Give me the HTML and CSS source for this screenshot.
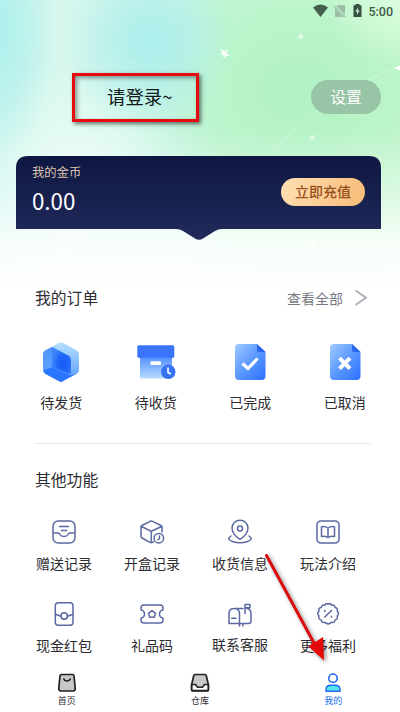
FILE: index.html
```
<!DOCTYPE html>
<html lang="zh-CN">
<head>
<meta charset="utf-8">
<title>我的</title>
<link rel="stylesheet" href="styles.css">
</head>
<body>
<div class="screen">
  <svg class="sparkles" width="400" height="270" viewBox="0 0 400 270" fill="#fff">
    <path d="M275 150 Q330 90 400 67" fill="none" stroke="#fff" stroke-opacity=".3" stroke-width="1"/>
    <path d="M220 48l4 3 4-2-1 4 3 3-4 0-2 3-1-4-3-1 2-2z" opacity=".8"/>
    <path d="M300 33l1.500 2.500 3 .5-2.500 1.500-1 2.500-1.500-2.500-3-1 3-.5z" opacity=".65"/>
    <path d="M312 134l1.500 2.500 3 1-3 1-1.500 3-1-3-3-1.500 3-.5z" opacity=".6"/>
    <path d="M400 65.500l-6 2.500 6 2.500z"/>
    <path d="M312 241l2 2 3 1-3 1-2 2-1-2-3-1 3-1z"/>
    <g opacity=".6"><circle cx="270" cy="37" r=".7"/><circle cx="134" cy="63" r=".7"/><circle cx="158" cy="58" r=".8"/><circle cx="240" cy="111" r=".6"/><circle cx="224" cy="131" r=".7"/><circle cx="321" cy="129" r=".7"/><circle cx="388" cy="189" r=".8"/></g>
  </svg>

  <div class="status">
    <svg width="50" height="16" viewBox="312 3 50 16">
      <path d="M313 7.500Q320.500 1.500 328 7.500L320.500 17z" fill="#43604d"/>
      <path d="M338.500 5H345V14.500L336.500 6zM335 8V17h9z" fill="#9dbda7"/><path d="M334 5.500l11.500 11.500" stroke="#86a591" stroke-width="1"/>
      <path d="M355.500 4h4v1.300h2V17h-8V5.300h2z" fill="#364f40"/><path d="M358.500 7l-3.200 4.500h2l-.8 3.700 3.200-4.700h-2z" fill="#d0f8da"/>
    </svg>
    <span>5:00</span>
  </div>

  <header class="profile">
    <div class="login">请登录~</div>
    <div class="settings">设置</div>
  </header>

  <section class="wallet">
    <svg class="wallet-bg" width="365" height="85" viewBox="0 0 365 85">
      <defs><linearGradient id="navy" x1="0" y1="0" x2="0" y2="1"><stop offset="0" stop-color="#0e1741"/><stop offset="1" stop-color="#212b5b"/></linearGradient></defs>
      <path d="M0 12Q0 0 12 0H353Q365 0 365 12V73H206Q202 73 199 75L187 82.500Q183 85 179 82.500L167 75Q164 73 160 73H0z" fill="url(#navy)"/>
    </svg>
    <div class="balance">
      <div class="coin-label">我的金币</div>
      <div class="amount">0.00</div>
    </div>
    <div class="recharge">立即充值</div>
  </section>

  <section class="orders">
    <div class="section-head">
      <h2>我的订单</h2>
      <div class="all">查看全部
        <svg width="14" height="18" viewBox="0 0 14 18"><path d="M1.500 1.500L12 8.700 1.500 16" fill="none" stroke="#a9abb4" stroke-width="1.800"/></svg>
      </div>
    </div>
    <div class="order-grid">
      <div class="item">
        <svg width="40" height="40" viewBox="0 0 40 40">
          <defs>
            <linearGradient id="b1" x1="0" y1="0" x2="0" y2="1"><stop offset="0" stop-color="#b4e0ff"/><stop offset="1" stop-color="#5c9cff"/></linearGradient>
            <linearGradient id="b2" x1="0" y1="0" x2="0" y2="1"><stop offset="0" stop-color="#4f94fc"/><stop offset=".6" stop-color="#5aa0ff"/><stop offset="1" stop-color="#2a74ff"/></linearGradient>
            <radialGradient id="b3" cx=".6" cy=".6" r=".6"><stop offset="0" stop-color="#125af6"/><stop offset=".5" stop-color="#2067fa"/><stop offset="1" stop-color="#3f86fc"/></radialGradient>
          </defs>
          <path d="M18 .8Q20 0 22 .8L36 8.500Q38 10 38 12V28Q38 30 36 31.500L22 39Q20 40 18 39L4 31.500Q2 30 2 28V12Q2 10 4 8.500z" fill="url(#b1)"/>
          <path d="M4 8.500L11 5 29 14.500V32L22 39Q20 40 18 39L4 31.500Q2 30 2 28V12Q2 10 4 8.500z" fill="url(#b2)"/>
          <path d="M3 28.500L11 25 29 33.500 36 31.500 22 39Q20 40 18 39L4 31.500z" fill="#2a76ff"/>
          <path d="M11 5L28 14Q30 15.500 30 18V32.500L11 25z" fill="url(#b3)"/>
        </svg>
        <span>待发货</span>
      </div>
      <div class="item">
        <svg width="40" height="40" viewBox="0 0 40 40">
          <defs><linearGradient id="b4" x1="0" y1="0" x2="0" y2="1"><stop offset="0" stop-color="#508bff"/><stop offset="1" stop-color="#b7dcff"/></linearGradient></defs>
          <path d="M4 14H36V35q0 1.500-1.500 1.500h-29Q4 36.500 4 35z" fill="url(#b4)"/>
          <rect x="1.300" y="3.200" width="37" height="12.500" rx="1.500" fill="#3974fb"/>
          <rect x="14.500" y="19.300" width="10.500" height="3.700" rx="1" fill="#fff"/>
          <circle cx="32.300" cy="29.800" r="7.200" fill="#3572f4"/>
          <path d="M32 25.500v5l3 1.500" fill="none" stroke="#fff" stroke-width="1.600"/>
        </svg>
        <span>待收货</span>
      </div>
      <div class="item">
        <svg width="40" height="40" viewBox="0 0 40 40">
          <defs><linearGradient id="b5" x1="0" y1="0" x2="1" y2="1"><stop offset="0" stop-color="#a0cbff"/><stop offset=".5" stop-color="#5b98ff"/><stop offset="1" stop-color="#2c70fe"/></linearGradient></defs>
          <path d="M9 2H27l8.500 8V34q0 4-4 4H9Q5 38 5 34V6Q5 2 9 2z" fill="url(#b5)"/><path d="M27 2v5.500Q27 10 29.500 10h6z" fill="#2866ee"/>
          <path d="M12.500 21.500l5.500 5 9.500-10" fill="none" stroke="#fff" stroke-width="3.200"/>
        </svg>
        <span>已完成</span>
      </div>
      <div class="item">
        <svg width="40" height="40" viewBox="0 0 40 40">
          <path d="M9 2H27l8.500 8V34q0 4-4 4H9Q5 38 5 34V6Q5 2 9 2z" fill="url(#b5)"/><path d="M27 2v5.500Q27 10 29.500 10h6z" fill="#2866ee"/>
          <path d="M14.500 16.200l10.500 10.500M25 16.200l-10.500 10.500" stroke="#fff" stroke-width="4"/>
        </svg>
        <span>已取消</span>
      </div>
    </div>
  </section>

  <section class="more">
    <h2>其他功能</h2>
    <div class="more-grid">
      <div class="item">
        <svg class="line" viewBox="0 0 26 26"><rect x="2" y="2" width="22" height="22" rx="5"/><path d="M2.500 14H7q1.500 0 2 1.500Q10 17.500 13 17.500T17 15.500Q17.500 14 19 14h4.500M8.500 7.500h9M10.500 11.500h5"/></svg>
        <span>赠送记录</span>
      </div>
      <div class="item">
        <svg class="line" viewBox="0 0 26 26"><path d="M23 13V8Q23 7 22 6.500L13.500 2.300Q12.300 1.700 11 2.300L3 6.500Q2 7 2 8V17.500Q2 18.500 3 19L11 23.300Q12 24 13.500 23.300L14.500 23M2.500 7.500L12.300 12.300 22.500 7.500M12.300 12.300V23"/><circle cx="19.800" cy="19.200" r="4.800" fill="#fff"/><path d="M20.500 17v2.500l-1.500 1.300"/></svg>
        <span>开盒记录</span>
      </div>
      <div class="item">
        <svg class="line" viewBox="0 0 26 26"><path d="M13 20.500Q5 15 5 9A8 7.800 0 0 1 21 9Q21 15 13 20.500z"/><circle cx="13" cy="9.500" r="2.500"/><path d="M4 17Q-1 20.500 5.500 22.500Q13 25 20.500 22.500Q27 20.500 22 17"/></svg>
        <span>收货信息</span>
      </div>
      <div class="item">
        <svg class="line" viewBox="0 0 26 26"><rect x="2" y="2" width="22" height="22" rx="3.800"/><path d="M13 9Q10.500 7 6.500 7.700V17.500Q10.500 16.500 13 18.500Q15.500 16.500 19.500 17.500V7.700Q15.500 7 13 9zV18.500"/></svg>
        <span>玩法介绍</span>
      </div>
      <div class="item">
        <svg class="line" viewBox="0 0 26 26"><rect x="4.300" y="1.700" width="17.700" height="22.500" rx="3"/><path d="M4.500 13.300l5.500 2M22 13.300l-5.500 2"/><circle cx="13.200" cy="15" r="3.200"/></svg>
        <span>现金红包</span>
      </div>
      <div class="item">
        <svg class="line" viewBox="0 0 26 26"><path d="M5 4H21Q24 4 24 7V9Q20.500 9.500 20.500 13T24 17V19Q24 22 21 22H5Q2 22 2 19V17Q5.500 16.500 5.500 13T2 9V7Q2 4 5 4z"/><path d="M13 9.700l3.500 2.600-1.300 4h-4.400l-1.300-4z"/></svg>
        <span>礼品码</span>
      </div>
      <div class="item raised">
        <svg class="line" viewBox="0 0 26 26"><path d="M12.500 22.500H2V12.500Q2 7.500 7.200 7.500T12.500 12.500zM7 7.500H16M20 7.500Q24 8 24 12.500V20Q24 22.500 21.500 22.500H12.500M4.800 17.200H9M18 12.500V3.500H23v3.200H18M12.500 22.500V25M16 22.500V25"/></svg>
        <span>联系客服</span>
      </div>
      <div class="item">
        <svg class="line" viewBox="0 0 26 26"><path d="M13 3Q15.200 1.800 16.600 4.300Q19.800 3.300 20 6.500Q23.300 7 22.200 10Q24.800 12.500 22.200 15Q23.300 18.500 20 19Q19.500 22.300 16.500 21.300Q13 24.500 10 21.300Q6.700 22.300 6.300 19Q3 18.500 4 15Q1.500 12.500 4 10Q3 7 6.300 6.500Q6.700 3.200 9.800 4.300Q11 1.800 13 3z"/><path d="M16.500 9.500L9.800 16M9.800 9.600v.8M16.500 15.300v.8"/></svg>
        <span>更多福利</span>
      </div>
    </div>
  </section>

  <nav class="tabs">
    <div class="tab">
      <svg width="20" height="20" viewBox="0 0 20 20"><path d="M4.500 1.500H15.500Q16.800 1.500 17 3L18.200 15Q18.500 18 16 18H4Q1.500 18 1.800 15L3 3Q3.200 1.500 4.500 1.500z" fill="#c8c8ca" stroke="#202125" stroke-width="1.700"/><path d="M6.500 5.500Q7.500 8 10 8t3.500-2.500" fill="none" stroke="#202125" stroke-width="1.600"/></svg>
      <span>首页</span>
    </div>
    <div class="tab">
      <svg width="20" height="20" viewBox="0 0 20 20"><path d="M5 1.500H15Q16 1.500 16.300 2.700L18.500 12V16Q18.500 18 16.500 18h-13Q1.500 18 1.500 16V12L3.700 2.700Q4 1.500 5 1.500z" fill="#c8c8ca" stroke="#202125" stroke-width="1.700"/><path d="M1.800 11.500H5.500L7.500 14.200H12.500L14.500 11.500H18.200V17.500H1.800z" fill="#fff" stroke="#202125" stroke-width="1.600"/></svg>
      <span>仓库</span>
    </div>
    <div class="tab active">
      <svg width="20" height="20" viewBox="0 0 20 20"><circle cx="10" cy="5.200" r="4.200" fill="#fff" stroke="#2269f5" stroke-width="1.600"/><path d="M3 18.300V16.500Q3 12.300 8 12.300h4Q17 12.300 17 16.500v1.800z" fill="#54e5ef" stroke="#2269f5" stroke-width="1.400"/></svg>
      <span>我的</span>
    </div>
  </nav>

  <div class="callout"></div>
  <svg class="arrow" width="400" height="712" viewBox="0 0 400 712"><path d="M266.500 555.500L314 643" stroke="#d90b0b" stroke-width="3" stroke-linecap="round"/><path d="M324 660.500L308.500 646.500Q315 642 323 637z" fill="#e50808"/></svg>
</div>
</body>
</html>
```
FILE: styles.css
```
* { box-sizing: border-box; }
body {
  margin: 0;
  font-family: "Noto Sans CJK SC", sans-serif;
  color: #2d2d31;
}
.screen {
  position: relative;
  width: 400px;
  height: 712px;
  overflow: hidden;
  display: flex;
  flex-direction: column;
  background:
    linear-gradient(180deg, rgba(255,255,255,0) 130px, rgba(255,255,255,.4) 195px, rgba(255,255,255,.85) 245px, #fff 292px),
    radial-gradient(ellipse 55px 130px at 0 30px, rgba(166,238,236,.8), rgba(166,238,236,0)),
    radial-gradient(ellipse 85px 90px at 150px 42px, #aeeeeb 15%, rgba(174,238,235,0)),
    radial-gradient(ellipse 75px 60px at 400px 5px, rgba(225,255,225,.8), rgba(225,255,225,0)),
    radial-gradient(ellipse 110px 90px at 75px 150px, rgba(236,253,243,.75), rgba(236,253,243,0)),
    radial-gradient(ellipse 190px 150px at 300px 90px, #b2f2c4 10%, rgba(178,242,196,0)),
    linear-gradient(90deg, #c9f4ee 0, #d7f7ee 60px, #cef6ea 180px, #c6f7d6 225px, #c8f7d0 400px);
}
.sparkles, .arrow { position: absolute; left: 0; top: 0; }
.arrow { filter: drop-shadow(2px 2px 2px rgba(0,0,0,.45)); }
.status {
  position: relative;
  height: 22px;
  display: flex;
  justify-content: flex-end;
  align-items: center;
  gap: 6px;
  padding-right: 7px;
  font: 500 12.500px/22px Roboto, sans-serif;
  color: #41594a;
}
.status span { padding-top: 1px; }
.status svg { margin-top: -1px; }
.profile {
  position: relative;
  height: 134px;
  padding: 58px 19px 0 107px;
  display: flex;
  justify-content: space-between;
  align-items: flex-start;
}
.login { margin-top: -1px; font-size: 18.400px; line-height: 34px; color: #101818; }
.settings {
  width: 70px;
  height: 34px;
  border-radius: 17px;
  background: #98c5a5;
  color: #fff;
  font-size: 15.800px;
  line-height: 34px;
  text-align: center;
}
.wallet {
  position: relative;
  width: 365px;
  height: 85px;
  margin-left: 16px;
  padding: 8px 16px 0 16px;
  display: flex;
  justify-content: space-between;
}
.wallet-bg { position: absolute; left: 0; top: 0; }
.balance, .recharge { position: relative; }
.coin-label { font-size: 12.300px; line-height: 17px; color: #dfc5ad; }
.amount { margin-top: 5px; font-size: 22.300px; line-height: 29px; color: #fff; }
.recharge {
  width: 84px;
  height: 28px;
  margin-top: 14px;
  border-radius: 14px;
  background: linear-gradient(110deg, #ffdfb3, #f8bc78);
  color: #97501c;
  font-size: 14px;
  font-weight: 500;
  line-height: 27px;
  text-align: center;
}
h2 { margin: 0; font-size: 15.800px; font-weight: 400; line-height: 24px; }
.orders {
  height: 203px;
  margin: 0 29px 0 35px;
  padding-top: 45px;
  border-bottom: 1px solid #ebebed;
}
.section-head { display: flex; justify-content: space-between; height: 24px; }
.all {
  display: flex;
  align-items: center;
  gap: 11px;
  margin-right: 3px;
  font-size: 14px;
  line-height: 22px;
  height: 23px;
  color: #777984;
}
.order-grid {
  display: grid;
  grid-template-columns: repeat(4, 94.500px);
  margin: 32px -21px 0;
}
.item { display: flex; flex-direction: column; align-items: center; }
.item span { font-size: 14px; line-height: 20px; white-space: nowrap; }
.order-grid .item span { margin-top: 10px; }
.more { padding: 24px 20px 0; }
.more h2 { margin-left: 15px; }
.more-grid {
  display: grid;
  grid-template-columns: repeat(4, 88px);
  grid-auto-rows: 82px;
  margin-top: 27px;
}
.line {
  width: 26px;
  height: 26px;
  fill: none;
  stroke: #5c68a2;
  stroke-width: 1.500;
  stroke-linejoin: round;
  stroke-linecap: round;
}
.more-grid .item span { margin-top: 8px; }
.more-grid .raised span { margin-top: 7px; }
.tabs {
  position: absolute;
  left: 0;
  right: 0;
  bottom: 0;
  height: 42px;
  padding-top: 3px;
  display: grid;
  grid-template-columns: repeat(3, 1fr);
}
.tab { display: flex; flex-direction: column; align-items: center; }
.tab span { margin-top: 1px; font-size: 9px; line-height: 14px; }
.active { color: #1b71ed; }
.callout {
  position: absolute;
  left: 72px;
  top: 73px;
  width: 127px;
  height: 49px;
  border: 3px solid #e50b0e;
  box-shadow: 2px 2px 4px rgba(0,0,0,.55), inset 2px 2px 4px rgba(0,0,0,.4);
}
```
